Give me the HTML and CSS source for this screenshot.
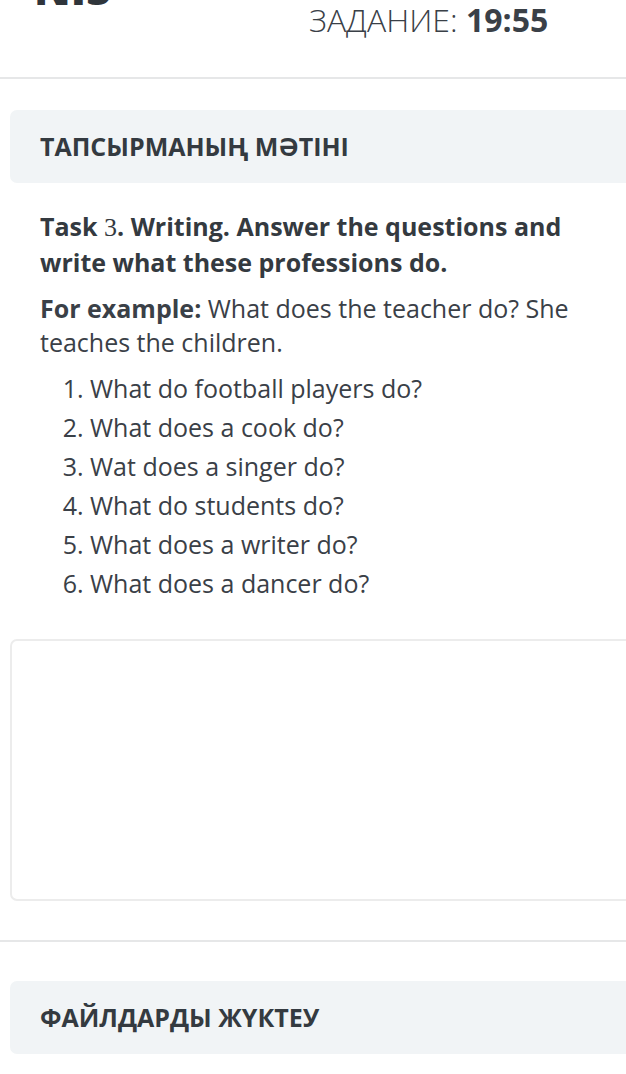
FILE: index.html
```html
<!DOCTYPE html>
<html lang="kk">
<head>
    <meta charset="UTF-8">
    <meta name="viewport" content="width=device-width, initial-scale=1.0">
    <title>Тапсырма</title>
    <link rel="stylesheet" href="styles.css">
</head>
<body>
    <header class="top">
        <div class="logo">NIS</div>
        <div class="timer">ЗАДАНИЕ: <b>19:55</b></div>
    </header>

    <main class="page">
        <div class="section-title">Тапсырманың мәтіні</div>

        <div class="task">
            <p class="task-head">Task <span class="num">3</span>. Writing. Answer the questions and write what these professions do.</p>
            <p class="example"><b>For example:</b> What does the teacher do? She teaches the children.</p>
            <ol class="questions">
                <li>What do football players do?</li>
                <li>What does a cook do?</li>
                <li>Wat does a singer do?</li>
                <li>What do students do?</li>
                <li>What does a writer do?</li>
                <li>What does a dancer do?</li>
            </ol>
        </div>

        <div class="answer"></div>

        <hr class="divider">

        <div class="section-title">Файлдарды жүктеу</div>
    </main>
</body>
</html>
```

FILE: styles.css
```css
* {
    margin: 0;
    padding: 0;
    box-sizing: border-box;
}
html, body {
    overflow-x: hidden;
}
body {
    font-family: 'Open Sans', 'Noto Sans', sans-serif;
    background-color: #fff;
    color: #3a4047;
}
.top {
    height: 79px;
    border-bottom: 2px solid #e6e7e8;
    position: relative;
}
.logo {
    position: absolute;
    left: 34px;
    top: -42px;
    font-size: 44px;
    font-weight: 800;
    color: #2f353b;
}
.timer {
    padding-left: 309px;
    font-size: 32px;
    line-height: 40px;
    font-weight: 300;
    color: #3a4047;
}
.timer b {
    font-weight: 700;
}
.page {
    padding-top: 31px;
}
.section-title {
    margin-left: 10px;
    margin-right: -20px;
    height: 73px;
    line-height: 73px;
    padding-left: 30px;
    background-color: #f1f4f6;
    border-radius: 7px;
    font-size: 25px;
    font-weight: 700;
    text-transform: uppercase;
    color: #343a40;
}
.task {
    padding: 0 30px 0 40px;
}
.task-head {
    margin-top: 26px;
    font-size: 25px;
    line-height: 35px;
    font-weight: 700;
    color: #343a40;
}
.task-head .num {
    font-family: 'Liberation Serif', serif;
    font-weight: 400;
    font-size: 26px;
}
.example {
    margin-top: 11px;
    font-size: 25px;
    line-height: 34px;
}
.example b {
    font-weight: 700;
}
.questions {
    margin-top: 10px;
    padding-left: 50px;
    font-size: 25px;
    line-height: 39px;
}
.answer {
    margin: 36px -20px 0 10px;
    height: 262px;
    border: 2px solid #ececec;
    border-radius: 7px;
}
.divider {
    margin: 39px 0 39px;
    border: none;
    border-top: 2px solid #e6e7e8;
}
```
